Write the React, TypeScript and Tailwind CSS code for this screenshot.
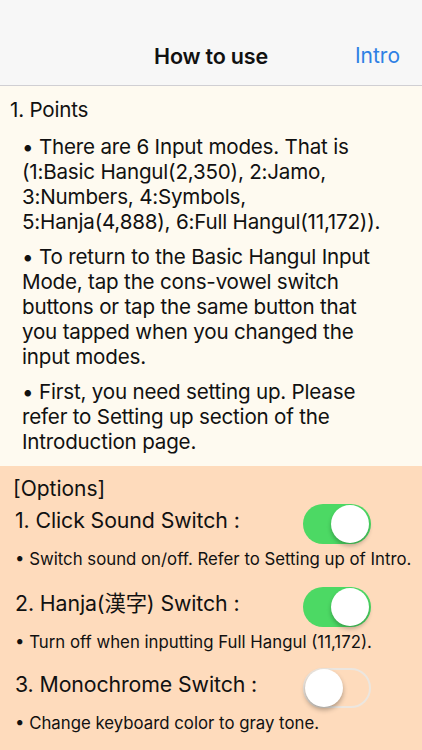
import React from 'react';

// line breaks kept as in the screenshot
const POINTS = [
  ['• There are 6 Input modes. That is', '(1:Basic Hangul(2,350), 2:Jamo,', '3:Numbers, 4:Symbols,', '5:Hanja(4,888), 6:Full Hangul(11,172)).'],
  ['• To return to the Basic Hangul Input', 'Mode, tap the cons-vowel switch', 'buttons or tap the same button that', 'you tapped when you changed the', 'input modes.'],
  ['• First, you need setting up. Please', 'refer to Setting up section of the', 'Introduction page.'],
];

const OPTIONS = [
  { title: '1. Click Sound Switch :', desc: 'Switch sound on/off. Refer to Setting up of Intro.', on: true, gap: '' },
  { title: '2. Hanja(漢字) Switch :', desc: 'Turn off when inputting Full Hangul (11,172).', on: true, gap: 'mt-[18px]' },
  { title: '3. Monochrome Switch :', desc: 'Change keyboard color to gray tone.', on: false, gap: 'mt-[16px]' },
];

function Toggle({ on }: { on: boolean }) {
  return (
    <div
      className={
        on
          ? 'relative h-[40px] w-[68px] shrink-0 rounded-full bg-[#4cd964]'
          : 'relative h-[40px] w-[68px] shrink-0 rounded-full border-2 border-[#ece6df]'
      }
    >
      <div
        className={
          on
            ? 'absolute right-[2px] top-[1px] h-[38px] w-[38px] rounded-full bg-white shadow-[0_3px_4px_rgba(0,0,0,0.25)]'
            : 'absolute left-0 top-[-1px] h-[38px] w-[38px] rounded-full bg-white shadow-[0_3px_5px_rgba(0,0,0,0.3)]'
        }
      />
    </div>
  );
}

export default function App() {
  return (
    <div className="flex h-[750px] w-[422px] flex-col overflow-hidden text-[#111] font-['Inter','Liberation_Sans','Noto_Sans_CJK_JP',sans-serif]">
      <header className="h-[86px] shrink-0 border-b border-[#d0cfd3] bg-[#f7f7f7] pt-[34px]">
        <div className="relative flex h-[44px] items-center justify-center">
          <span className="text-[21.5px] font-semibold tracking-[-0.2px]">How to use</span>
          <span className="absolute right-[22px] text-[21px] text-[#2f80e4]">Intro</span>
        </div>
      </header>

      <section className="whitespace-nowrap bg-[#fefaf0] px-[10px] pb-[12px] pt-[11px] text-[20.6px] leading-[25px] tracking-[-0.2px]">
        <div>1. Points</div>
        <div className="mt-[12px] flex flex-col gap-[10px] pl-[12px]">
          {POINTS.map(p => (
            <p key={p[0]}>
              {p.map(line => (
                <span key={line} className="block">
                  {line}
                </span>
              ))}
            </p>
          ))}
        </div>
      </section>

      <section className="flex-1 whitespace-nowrap bg-[#fedbbc] px-[13px] pt-[10px]">
        <div className="text-[21px] leading-[25px]">[Options]</div>
        <div className="mt-[3px] flex flex-col">
          {OPTIONS.map(o => (
            <div key={o.title} className={o.gap}>
              <div className="flex h-[40px] items-center pr-[38px]">
                <span className="flex-1 pb-[6px] pl-[2px] text-[21.3px] tracking-[-0.1px]">{o.title}</span>
                <Toggle on={o.on} />
              </div>
              <div className="mt-[5px] pl-[2px] text-[16.8px] leading-[20px]">• {o.desc}</div>
            </div>
          ))}
        </div>
      </section>
    </div>
  );
}
